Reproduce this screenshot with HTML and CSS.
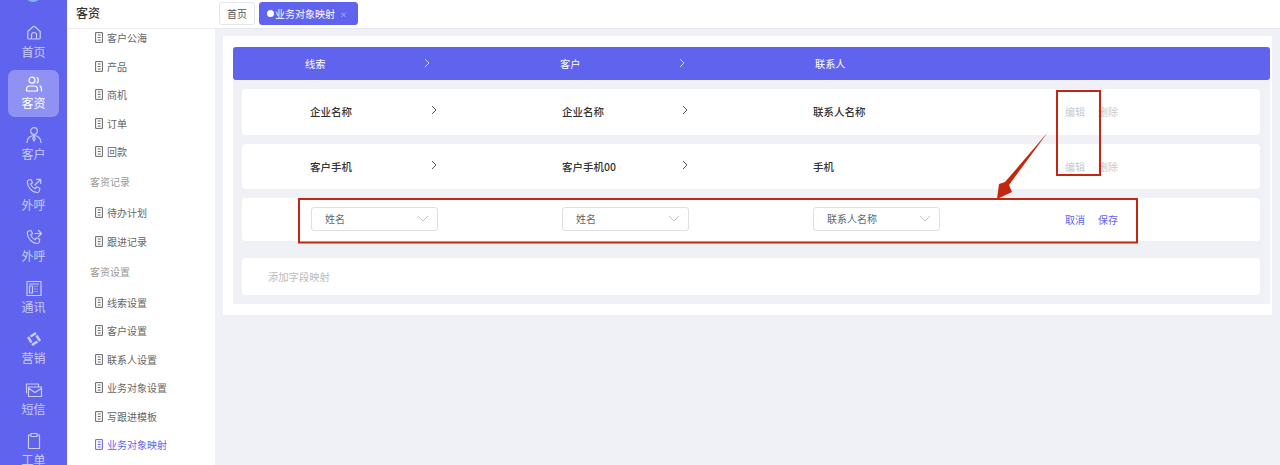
FILE: index.html
```html
<!DOCTYPE html>
<html lang="zh">
<head>
<meta charset="utf-8">
<title>业务对象映射</title>
<link rel="stylesheet" href="styles.css">
</head>
<body>
<svg class="sprite" width="0" height="0" aria-hidden="true">
  <symbol id="doc" viewBox="0 0 8 11"><path d="M.6.6h6.800v9.800H.6zM2.800 3h2.800M2.800 5.500h2.800M2.800 8h2.800" fill="none" stroke="currentColor" stroke-width="1"/></symbol>
</svg>
<div class="app">
  <nav class="rail">
    <span class="logo"></span>
    <a class="rail-item"><svg class="rail-icon" viewBox="0 0 18 18"><path d="M2.800 7.500 8 2.800q1-.8 2 0l5.200 4.700V14a1 1 0 0 1-1 1H3.800a1 1 0 0 1-1-1zM6.500 15v-4a2.500 2.500 0 0 1 5 0v4"/></svg><span>首页</span></a>
    <a class="rail-item active"><svg class="rail-icon" viewBox="0 0 18 18"><circle cx="7" cy="5.200" r="3"/><path d="M1.500 14.500c0-2 1.500-3.500 3.500-3.500h4c2 0 3.500 1.500 3.500 3.500v1.500h-11zM12 2.500c1.800 1 1.800 4.500 0 5.500M15 11c1.300.8 1.600 3 1.500 5"/></svg><span>客资</span></a>
    <a class="rail-item"><svg class="rail-icon" viewBox="0 0 18 18"><circle cx="9" cy="5" r="3.300"/><path d="M2 16.500c0-4 3-7 7-7s7 3 7 7M9 10l-1.300 2.500L9 15l1.300-2.500z"/></svg><span>客户</span></a>
    <a class="rail-item"><svg class="rail-icon" viewBox="0 0 18 18"><path d="M3.500 3 6 2.500l1.500 3.300-1.800 1.300c.8 2 2.500 3.700 4.500 4.500l1.300-1.800 3.300 1.500-.5 2.700c-.2 1-1 1.500-2 1.500C7 15.500 2.500 10 2.300 5c0-1 .3-1.600 1.200-2zM10 8l5.500-5.500M11.500 2.300h4.200v4.200"/></svg><span>外呼</span></a>
    <a class="rail-item"><svg class="rail-icon" viewBox="0 0 18 18"><path d="M3.500 3 6 2.500l1.500 3.300-1.800 1.300c.8 2 2.500 3.700 4.500 4.500l1.300-1.800 3.300 1.500-.5 2.700c-.2 1-1 1.500-2 1.500C7 15.500 2.500 10 2.300 5c0-1 .3-1.600 1.200-2zM10 5.500h6.500M13.500 2.500l3 3-3 3"/></svg><span>外呼</span></a>
    <a class="rail-item"><svg class="rail-icon" viewBox="0 0 18 18"><path d="M2 2.500h14v14H2zM4.500 5h9M4.500 7h3v7h-3z"/><path class="dash" d="M9.500 7.500h4M9.500 10h4M9.500 12.500h4"/></svg><span>通讯</span></a>
    <a class="rail-item"><svg class="rail-icon swirl" viewBox="0 0 18 18"><path d="M5.500 6.500 11 3"/><path d="M5.500 6.500 11 3" transform="rotate(90 9 9)"/><path d="M5.500 6.500 11 3" transform="rotate(180 9 9)"/><path d="M5.500 6.500 11 3" transform="rotate(270 9 9)"/></svg><span>营销</span></a>
    <a class="rail-item"><svg class="rail-icon" viewBox="0 0 18 18"><path d="M1.500 12V3h12v3M3.500 6h13v9.500h-13zM3.500 7.200l6.500 4.300 6.500-4.300"/></svg><span>短信</span></a>
    <a class="rail-item"><svg class="rail-icon" viewBox="0 0 18 18"><path d="M6 3H3.500v13.500h11V3H12M6 1.500h6v3H6z"/></svg><span>工单</span></a>
  </nav>

  <aside class="submenu">
    <header class="submenu-title">客资</header>
    <div class="submenu-list">
      <a class="sub-item"><svg class="doc"><use href="#doc"/></svg>客户公海</a>
      <a class="sub-item"><svg class="doc"><use href="#doc"/></svg>产品</a>
      <a class="sub-item"><svg class="doc"><use href="#doc"/></svg>商机</a>
      <a class="sub-item"><svg class="doc"><use href="#doc"/></svg>订单</a>
      <a class="sub-item"><svg class="doc"><use href="#doc"/></svg>回款</a>
      <div class="sub-group">客资记录</div>
      <a class="sub-item"><svg class="doc"><use href="#doc"/></svg>待办计划</a>
      <a class="sub-item"><svg class="doc"><use href="#doc"/></svg>跟进记录</a>
      <div class="sub-group">客资设置</div>
      <a class="sub-item"><svg class="doc"><use href="#doc"/></svg>线索设置</a>
      <a class="sub-item"><svg class="doc"><use href="#doc"/></svg>客户设置</a>
      <a class="sub-item"><svg class="doc"><use href="#doc"/></svg>联系人设置</a>
      <a class="sub-item"><svg class="doc"><use href="#doc"/></svg>业务对象设置</a>
      <a class="sub-item"><svg class="doc"><use href="#doc"/></svg>写跟进模板</a>
      <a class="sub-item current"><svg class="doc"><use href="#doc"/></svg>业务对象映射</a>
    </div>
  </aside>

  <main class="main">
    <div class="tabs">
      <span class="tab">首页</span>
      <span class="tab tab-active"><i class="dot"></i>业务对象映射<i class="close">×</i></span>
    </div>
    <div class="content">
      <section class="card">
        <div class="panel">
          <div class="head">
            <span class="head-cell">线索<svg class="chev" viewBox="0 0 8 10"><path d="M2 1l4 4-4 4"/></svg></span>
            <span class="head-cell">客户<svg class="chev" viewBox="0 0 8 10"><path d="M2 1l4 4-4 4"/></svg></span>
            <span class="head-cell">联系人</span>
          </div>
          <div class="rows">
            <div class="row tall">
              <span class="cell">企业名称<svg class="chev" viewBox="0 0 8 10"><path d="M2 1l4 4-4 4"/></svg></span>
              <span class="cell">企业名称<svg class="chev" viewBox="0 0 8 10"><path d="M2 1l4 4-4 4"/></svg></span>
              <span class="cell">联系人名称</span>
              <span class="actions muted"><a>编辑</a><a>删除</a></span>
            </div>
            <div class="row tall">
              <span class="cell">客户手机<svg class="chev" viewBox="0 0 8 10"><path d="M2 1l4 4-4 4"/></svg></span>
              <span class="cell">客户手机00<svg class="chev" viewBox="0 0 8 10"><path d="M2 1l4 4-4 4"/></svg></span>
              <span class="cell">手机</span>
              <span class="actions muted"><a>编辑</a><a>删除</a></span>
            </div>
            <div class="row edit">
              <span class="cell"><span class="select first">姓名<svg class="caret" viewBox="0 0 12 7"><path d="M1 1l5 5 5-5"/></svg></span></span>
              <span class="cell"><span class="select">姓名<svg class="caret" viewBox="0 0 12 7"><path d="M1 1l5 5 5-5"/></svg></span></span>
              <span class="cell"><span class="select">联系人名称<svg class="caret" viewBox="0 0 12 7"><path d="M1 1l5 5 5-5"/></svg></span></span>
              <span class="actions link"><a>取消</a><a>保存</a></span>
            </div>
            <div class="row add">添加字段映射</div>
          </div>
        </div>
      </section>
    </div>
  </main>
</div>

<svg class="annotation" width="1280" height="465" viewBox="0 0 1280 465" aria-hidden="true">
  <rect x="1057" y="91" width="43" height="84" />
  <rect x="299" y="199" width="838" height="43.500" />
  <polygon points="1048,132 1009,185 1012,192 997,199 999,184 1005,182" />
</svg>
</body>
</html>
```
FILE: styles.css
```css
* { box-sizing: border-box; }
html, body { margin: 0; height: 100%; overflow: hidden; }
body { font-family: "Noto Sans CJK SC", "Noto Sans", sans-serif; color: #333; background: #f0f1f6; }
a { text-decoration: none; color: inherit; }
.sprite { position: absolute; }

.app { display: flex; height: 465px; overflow: hidden; }

.rail { position: relative; width: 67px; flex: none; background: #5f63ee; padding: 19px 8px 0; display: flex; flex-direction: column; gap: 4px; overflow: hidden; }
.logo { position: absolute; left: 25px; top: -14px; width: 16px; height: 16px; border-radius: 50%; background: #7fb4f5; }
.rail-item { flex: none; height: 47px; border-radius: 7px; display: flex; flex-direction: column; align-items: center; padding-top: 5px; font-size: 12px; line-height: 16px; color: #c9cbf9; gap: 2px; }
.rail-item.active { background: #8f92f3; color: #fff; }
.rail-icon { width: 18px; height: 18px; fill: none; stroke: currentColor; stroke-width: 1.200; stroke-linejoin: round; stroke-linecap: round; }
.rail-icon .dash { stroke-dasharray: 1 1; stroke-linecap: butt; }
.rail-icon.swirl { stroke-width: 2.400; stroke-linecap: butt; }

.submenu { width: 148px; flex: none; background: #fff; display: flex; flex-direction: column; overflow: hidden; }
.submenu-title { flex: none; position: relative; z-index: 1; height: 29px; padding-left: 9px; font-size: 12px; line-height: 26px; font-weight: 500; color: #333; background: #fff; border-bottom: 1px solid #ecedf2; }
.submenu-list { margin-top: -5.500px; }
.sub-item { display: flex; align-items: center; height: 28.500px; padding-left: 28px; font-size: 10px; color: #666; gap: 4px; }
.sub-item.current { color: #5f63ee; }
.doc { width: 8px; height: 11px; flex: none; color: #666; }
.current .doc { color: #5f63ee; }
.sub-group { height: 32.500px; padding-left: 23px; font-size: 10px; line-height: 32px; color: #999; }

.main { flex: 1; min-width: 0; display: flex; flex-direction: column; }
.tabs { flex: none; height: 29px; padding: 2px 4px 0; display: flex; gap: 4px; align-items: flex-start; background: #fff; border-bottom: 1px solid #e8e9ef; }
.tab { height: 23px; padding: 0 7px; display: flex; align-items: center; font-size: 10px; color: #555; background: #fff; border: 1px solid #e4e5ec; border-radius: 3px; }
.tab-active { width: 99px; background: #5f63ee; border-color: #5f63ee; color: #fff; }
.dot { width: 7px; height: 7px; border-radius: 50%; background: #fff; margin-right: 1px; flex: none; }
.close { font-style: normal; font-size: 7px; margin-left: 5px; color: #cfd0fa; }

.content { flex: 1; padding: 7px 8px 0; }
.card { background: #fff; padding: 11px 2px 10px 10px; height: 279px; }
.panel { background: #f0f1f6; height: 257px; }
.head { height: 33px; background: #5f63ee; border-radius: 3px; display: grid; grid-template-columns: repeat(3, 255px); padding-left: 72px; align-items: center; color: #fff; font-size: 10.200px; }
.head-cell { display: flex; align-items: center; }
.head-cell .chev { margin-left: 98px; margin-top: -2px; color: #d5d6fb; }
.chev { width: 8px; height: 10px; fill: none; stroke: currentColor; stroke-width: 1; flex: none; }
.rows { padding: 9px 10px 0 9px; display: flex; flex-direction: column; gap: 9px; }
.row { background: #fff; border-radius: 4px; display: grid; grid-template-columns: 252px 251px 252px 1fr; padding-left: 68px; align-items: center; font-size: 10.500px; }
.tall { height: 45.500px; color: #333; font-weight: 500; }
.tall .chev { margin-top: -3px; }
.edit { height: 42.500px; }
.add { display: block; height: 37px; margin-top: 8px; padding-left: 26px; line-height: 37px; font-size: 10.300px; color: #bbb; }
.cell { display: flex; align-items: center; }
.cell .chev { color: #555; margin-left: auto; margin-right: 124px; }
.actions { display: flex; gap: 13px; font-size: 10px; font-weight: 400; }
.actions.muted { color: #c8c9cf; }
.actions.link { color: #5f63ee; }
.select { width: 127px; height: 24px; display: flex; align-items: center; justify-content: space-between; padding: 0 8px 0 13px; border: 1px solid #dfe0e6; border-radius: 3px; background: #fff; font-size: 10px; color: #666; margin-top: -1px; }
.select.first { margin-left: 1px; }
.caret { width: 12px; height: 7px; fill: none; stroke: #c3c4cb; stroke-width: 1; }

.annotation { position: absolute; left: 0; top: 0; pointer-events: none; }
.annotation rect { fill: none; stroke: #c4260f; stroke-width: 2; }
.annotation polygon { fill: #c4260f; }
```
